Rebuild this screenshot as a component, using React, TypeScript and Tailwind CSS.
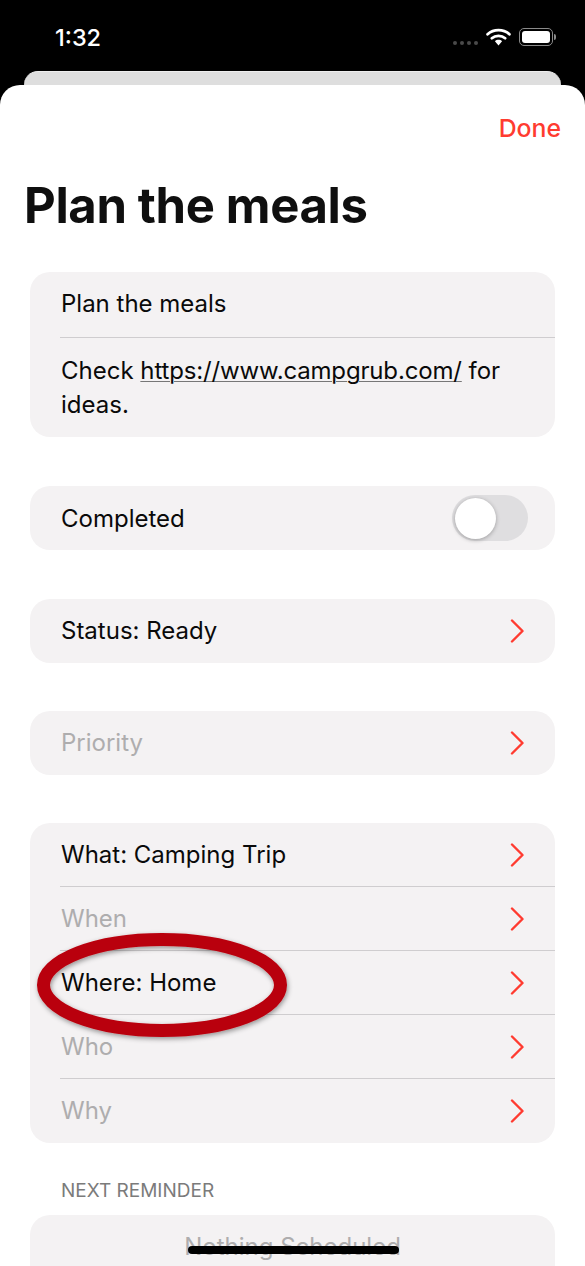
import React from 'react';

const Chevron = () => (
  <svg width="16" height="24" viewBox="0 0 16 24" fill="none" className="shrink-0">
    <path d="M3 1.5 L13.5 12 L3 22.5" stroke="#ff3b30" strokeWidth="2.4" strokeLinecap="round" strokeLinejoin="round" />
  </svg>
);

const Row = ({ label, muted, divider }: { label: string; muted?: boolean; divider?: boolean }) => (
  <div className={`h-16 flex items-center pr-[30px] ${divider ? 'border-b border-[#cfcdcf]' : ''}`}>
    <span className={`flex-1 pl-px ${muted ? 'text-[#aeadae]' : 'text-[#0a0a0a]'}`}>{label}</span>
    <Chevron />
  </div>
);

const Card = ({ children, className = '' }: { children: React.ReactNode; className?: string }) => (
  <div className={`mx-[30px] shrink-0 rounded-[20px] bg-[#f4f2f3] pl-[30px] ${className}`}>{children}</div>
);

export default function App() {
  return (
    <div className="relative h-[1266px] overflow-hidden bg-black flex flex-col font-['Inter',sans-serif] text-[24px]">
      {/* status bar */}
      <div className="h-[71px] shrink-0 flex items-start pl-[55px] pr-[29px] text-white">
        <span className="mt-[21px] text-[23.5px] font-medium leading-[34px]">1:32</span>
        <div className="ml-auto flex items-start pt-[28px]">
          <div className="flex gap-[3px] mt-[13px] mr-[8px]">
            <i className="w-[4px] h-[4px] rounded-full bg-[#4a4a4a]" />
            <i className="w-[4px] h-[4px] rounded-full bg-[#4a4a4a]" />
            <i className="w-[4px] h-[4px] rounded-full bg-[#4a4a4a]" />
            <i className="w-[4px] h-[4px] rounded-full bg-[#4a4a4a]" />
          </div>
          <svg width="25" height="18" viewBox="0 0 25 18" fill="none" className="mr-[8px]">
            <path d="M1.6 6.2 C7.6 0.8 17.4 0.8 23.4 6.2" stroke="white" strokeWidth="2.8" strokeLinecap="round" />
            <path d="M5.8 10.2 C9.5 7 15.5 7 19.2 10.2" stroke="white" strokeWidth="2.8" strokeLinecap="round" />
            <path d="M8.9 13.2 L12.5 17.4 L16.1 13.2 C14.1 11.4 10.9 11.4 8.9 13.2 Z" fill="white" />
          </svg>
          <div className="w-[34px] h-[18px] rounded-[5px] border border-[#8a8a8a] p-[2px]">
            <div className="w-full h-full rounded-[3px] bg-white" />
          </div>
          <div className="ml-[1px] mt-[6px] w-[2px] h-[6px] rounded-r bg-[#8a8a8a]" />
        </div>
      </div>

      {/* sheet behind */}
      <div className="h-[14px] shrink-0 mx-6 rounded-t-[16px] bg-[#dedede] border-t border-[#eeeeee]" />

      {/* sheet */}
      <div className="flex-1 rounded-t-[20px] bg-white flex flex-col min-h-0">
        <div className="h-[86px] shrink-0 flex justify-end items-start pr-6 pt-[26px]">
          <span className="text-[24.8px] text-[#ff3b30] font-medium leading-[34px]">Done</span>
        </div>
        <h1 className="pl-6 h-[101px] shrink-0 text-[49px] font-bold text-[#0f0f0f] leading-[70px] tracking-[-0.35px]">Plan the meals</h1>

        <Card>
          <div className="h-[66px] pb-[2px] pl-px flex items-center border-b border-[#cfcdcf] text-[#0a0a0a]">Plan the meals</div>
          <div className="pt-[16px] pb-[15px] pl-px pr-[30px] leading-[34px] text-[#0a0a0a]">
            Check <span className="underline decoration-1 decoration-[#777777] underline-offset-2 tracking-[-0.16px]">https://www.campgrub.com/</span> for ideas.
          </div>
        </Card>

        <Card className="mt-[49px] h-16 flex items-center pr-[27px] text-[#0a0a0a]">
          <span className="flex-1 pl-px pt-[2px]">Completed</span>
          <div className="w-[76px] h-[46px] rounded-full bg-[#dfdee0] p-[2.5px]">
            <div className="w-[41px] h-[41px] rounded-full bg-white shadow-[0_1px_4px_rgba(0,0,0,0.3)]" />
          </div>
        </Card>

        <Card className="mt-[49px]"><Row label="Status: Ready" /></Card>
        <Card className="mt-[48px]"><Row label="Priority" muted /></Card>

        <Card className="mt-[48px]">
          <Row label="What: Camping Trip" divider />
          <Row label="When" muted divider />
          <Row label="Where: Home" divider />
          <Row label="Who" muted divider />
          <Row label="Why" muted />
        </Card>

        <div className="pl-[61px] mt-[36px] h-[36px] shrink-0 text-[19px] leading-[24px] text-[#7b7b7b]">NEXT REMINDER</div>
        <div className="mx-[30px] shrink-0 rounded-[20px] bg-[#f4f2f3] h-[80px] text-center text-[#aeadae] pt-[14px]">Nothing Scheduled</div>
      </div>

      {/* annotation ring */}
      <svg width="270" height="124" viewBox="0 0 270 124" fill="none" className="absolute left-[28px] top-[924px]">
        <defs>
          <filter id="ringShadow" x="-10%" y="-20%" width="120%" height="140%">
            <feDropShadow dx="1" dy="2" stdDeviation="2.5" floodColor="#000" floodOpacity="0.4" />
          </filter>
        </defs>
        <ellipse cx="134" cy="61" rx="118.5" ry="45.5" stroke="#b9000e" strokeWidth="13" filter="url(#ringShadow)" />
      </svg>

      {/* home indicator */}
      <div className="absolute left-[188px] bottom-[12px] w-[211px] h-[8px] rounded-full bg-black" />
    </div>
  );
}
